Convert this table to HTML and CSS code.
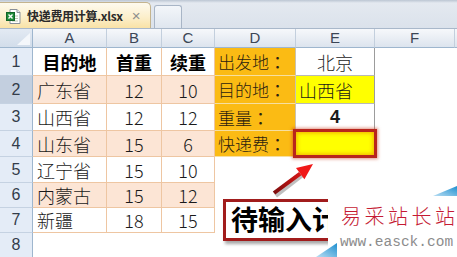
FILE: index.html
```html
<!DOCTYPE html>
<html>
<head>
<meta charset="utf-8">
<link rel="stylesheet" href="styles.css">
</head>
<body>
<div class="tabbar">
  <div class="tab">
    <svg class="xlicon" width="15" height="17" viewBox="0 0 15 17">
      <path d="M4 1.5 H11 L14 4.5 V15.5 H4 Z" fill="#fff" stroke="#8a9099" stroke-width="1"/>
      <path d="M11 1.5 V4.5 H14" fill="#e8ecef" stroke="#8a9099" stroke-width="1"/>
      <line x1="6" y1="8" x2="12" y2="8" stroke="#b9c6b0"/>
      <line x1="6" y1="10.5" x2="12" y2="10.5" stroke="#b9c6b0"/>
      <line x1="6" y1="13" x2="12" y2="13" stroke="#b9c6b0"/>
      <rect x="0.5" y="4.5" width="8" height="8" fill="#1f8a3a" stroke="#13652a"/>
      <path d="M2.5 6.5 L6.5 10.5 M6.5 6.5 L2.5 10.5" stroke="#fff" stroke-width="1.4"/>
    </svg>
    <span class="tabname">快递费用计算.xlsx</span>
    <span class="tabclose">×</span>
  </div>
  <div class="newtab"></div>
</div>

<div class="sheet">
  <div class="corner"></div>
  <div class="ch">A</div><div class="ch">B</div><div class="ch">C</div><div class="ch">D</div><div class="ch">E</div><div class="ch">F</div><div class="rest"></div>

  <div class="rh">1</div>
  <div class="c t bold center">目的地</div><div class="c t bold center">首重</div><div class="c t bold center">续重</div>
  <div class="c lab">出发地<span class="colon">：</span></div><div class="c val center">北京</div><div class="e"></div><div class="rest"></div>

  <div class="rh sel">2</div>
  <div class="c t p">广东省</div><div class="c t p center">12</div><div class="c t p center">10</div>
  <div class="c lab">目的地<span class="colon">：</span></div><div class="c val yel">山西省</div><div class="e"></div><div class="rest"></div>

  <div class="rh">3</div>
  <div class="c t">山西省</div><div class="c t center">12</div><div class="c t center">12</div>
  <div class="c lab">重量<span class="colon">：</span></div><div class="c val center num">4</div><div class="e"></div><div class="rest"></div>

  <div class="rh">4</div>
  <div class="c t p">山东省</div><div class="c t p center">15</div><div class="c t p center">6</div>
  <div class="c lab">快递费<span class="colon">：</span></div><div class="c val yel hl"></div><div class="e"></div><div class="rest"></div>

  <div class="rh">5</div>
  <div class="c t">辽宁省</div><div class="c t center">15</div><div class="c t center">10</div>
  <div class="e"></div><div class="e"></div><div class="e"></div><div class="rest"></div>

  <div class="rh">6</div>
  <div class="c t p">内蒙古</div><div class="c t p center">15</div><div class="c t p center">12</div>
  <div class="e"></div><div class="e"></div><div class="e"></div><div class="rest"></div>

  <div class="rh">7</div>
  <div class="c t">新疆</div><div class="c t center">18</div><div class="c t center">15</div>
  <div class="e"></div><div class="e"></div><div class="e"></div><div class="rest"></div>

  <div class="rh">8</div>
  <div class="e"></div><div class="e"></div><div class="e"></div><div class="e"></div><div class="e"></div><div class="e"></div><div class="rest"></div>
</div>

<svg class="arrow" width="457" height="257" viewBox="0 0 457 257">
  <defs>
    <linearGradient id="ag" x1="274" y1="193" x2="313" y2="164" gradientUnits="userSpaceOnUse">
      <stop offset="0" stop-color="#7d0d0d"/>
      <stop offset="1" stop-color="#ff1c1c"/>
    </linearGradient>
  </defs>
  <polygon points="276,196 273.5,192.5 300,172 302.4,175.6" fill="rgba(0,0,0,0.25)" transform="translate(1,1.5)"/>
  <polygon points="275.2,194.6 272.8,191.4 299,172 301.4,175.2" fill="url(#ag)"/>
  <polygon points="313,164 296,168 304.4,179.2" fill="#f01818"/>
</svg>

<div class="callout">待输入计</div>

<div class="watermark">
  <svg class="tri" width="129" height="62" viewBox="0 0 129 62">
    <defs>
      <linearGradient id="bg1" x1="0" y1="1" x2="1" y2="0">
        <stop offset="0" stop-color="#b9def3"/>
        <stop offset="1" stop-color="#1e8fd0"/>
      </linearGradient>
    </defs>
    <polygon points="105,1 129,-9 129,1" fill="url(#bg1)"/>
    <polygon points="-12,62 9,48 9,62" fill="url(#bg1)"/>
  </svg>
  <div class="wm-cn">易采站长站</div>
  <div class="wm-url">www.easck.com</div>
</div>
</body>
</html>
```

FILE: styles.css
```css
html, body {
  margin: 0;
  padding: 0;
  background: #ffffff;
  width: 457px;
  height: 257px;
  overflow: hidden;
  font-family: "Noto Sans CJK SC", "Liberation Sans", sans-serif;
}

.tabbar {
  height: 28px;
  border-bottom: 1px solid #a9b8ca;
  background: linear-gradient(#bcc6d3 0px, #e4e9f0 3px, #dbe2eb 100%);
  display: flex;
  align-items: flex-end;
  gap: 3px;
  box-sizing: content-box;
}

.tab {
  width: 152px;
  height: 26px;
  box-sizing: border-box;
  margin-left: -1px;
  border: 1px solid #c4b48e;
  border-bottom: none;
  border-radius: 0 5px 0 0;
  background: linear-gradient(#fefaee 0%, #fcefcc 55%, #f9e2a6 100%);
  display: flex;
  align-items: center;
  padding-left: 6px;
}

.xlicon {
  flex: none;
  margin-top: 2px;
}

.tabname {
  margin-left: 6px;
  font-size: 12px;
  font-weight: bold;
  color: #2a2a2a;
  white-space: nowrap;
  letter-spacing: -0.3px;
}

.tabclose {
  margin-left: 9px;
  font-size: 15px;
  color: #8e8e8e;
  font-family: "Liberation Sans", sans-serif;
}

.newtab {
  width: 28px;
  height: 23px;
  box-sizing: border-box;
  border: 1px solid #a8b5c6;
  border-bottom: none;
  border-radius: 3px 3px 0 0;
  background: linear-gradient(#f3f6fa, #dfe6ef);
}

.sheet {
  display: grid;
  grid-template-columns: 33px 74px 55px 53px 81px 79px 80px 2px;
  grid-template-rows: 19px 28px 28px 27px 26px 26px 25px 25px 25px;
}

.sheet > div {
  box-sizing: border-box;
}

.corner {
  position: relative;
  background: linear-gradient(#e3eaf3, #d2ddea);
  border-right: 1px solid #9eb6ce;
  border-bottom: 1px solid #9eb6ce;
}

.corner::after {
  content: "";
  position: absolute;
  right: 2px;
  bottom: 2px;
  width: 13px;
  height: 12px;
  background: #f4f7fb;
  clip-path: polygon(100% 0, 100% 100%, 0 100%);
}

.ch {
  background: linear-gradient(#f6f8fb 0%, #e7ecf3 60%, #dce4ee 100%);
  border-right: 1px solid #c3cfdd;
  border-bottom: 1px solid #9eb6ce;
  font-family: "Liberation Sans", sans-serif;
  font-size: 15px;
  color: #3b4656;
  text-align: center;
  line-height: 18px;
}

.rest {
  background: #ffffff;
}

.ch + .rest {
  background: linear-gradient(#f6f8fb, #dce4ee);
  border-bottom: 1px solid #9eb6ce;
}

.rh {
  background: #e4ecf7;
  border-right: 1px solid #9eb6ce;
  border-bottom: 1px solid #c5d2e2;
  font-family: "Liberation Sans", sans-serif;
  font-size: 16px;
  color: #333c4a;
  display: flex;
  align-items: center;
  justify-content: center;
}

.rh.sel {
  background: #c3cfdf;
}

.c {
  display: flex;
  align-items: center;
  font-size: 18px;
  color: #1a1a1a;
  white-space: nowrap;
  overflow: visible;
  padding-left: 4px;
  font-weight: 300;
}

.c.center {
  justify-content: center;
  padding-left: 0;
}

.c.bold {
  font-weight: bold;
  color: #000;
}

.t {
  border-right: 1px solid #eec6a2;
  border-bottom: 1px solid #eec6a2;
  background: #ffffff;
}

.t.p {
  background: #fce5d5;
}

.lab {
  background: #fbbb14;
  border-right: 1px solid #c9c2b0;
  border-bottom: 1px solid #f6dfa0;
  font-size: 17px;
  color: #2b2210;
  padding-left: 3px;
}

.colon {
  font-family: "Noto Sans CJK JP", "Noto Sans CJK TC", sans-serif;
  font-weight: 400;
}

.val {
  background: #ffffff;
  border-right: 1px solid #9c9c9c;
  border-bottom: 1px solid #b8b8b8;
  color: #1a1a1a;
}

.val.yel {
  background: #ffff00;
  padding-left: 3px;
}

.val.num {
  font-family: "Liberation Sans", sans-serif;
  font-weight: bold;
  font-size: 18px;
}

.hl {
  position: relative;
}

.hl::after {
  content: "";
  position: absolute;
  left: -3px;
  top: -2px;
  right: -3px;
  bottom: -2px;
  border: 3px solid #b8251c;
  box-shadow: 0 0 3px 1px rgba(200, 60, 30, 0.55), inset 0 0 4px 1px rgba(230, 120, 0, 0.6);
}

.e {
  background: #ffffff;
}

.arrow {
  position: absolute;
  left: 0;
  top: 0;
  pointer-events: none;
}

.callout {
  position: absolute;
  left: 223px;
  top: 199px;
  width: 120px;
  height: 42px;
  box-sizing: border-box;
  border: 3px solid #a11c1c;
  background: #ffffff;
  box-shadow: 2px 3px 3px rgba(0, 0, 0, 0.35);
  font-family: "Noto Sans CJK SC", sans-serif;
  font-weight: bold;
  font-size: 27px;
  line-height: 34px;
  color: #000;
  padding-left: 5px;
  white-space: nowrap;
  overflow: hidden;
}

.watermark {
  position: absolute;
  left: 328px;
  top: 195px;
  width: 129px;
  height: 62px;
  background: #ffffff;
  overflow: visible;
}

.tri {
  position: absolute;
  left: 0;
  top: 0;
  overflow: visible;
}

.wm-cn {
  position: absolute;
  left: 13px;
  top: 6px;
  font-family: "Noto Sans CJK SC", serif;
  font-weight: 300;
  font-size: 20px;
  letter-spacing: 3.5px;
  color: #c51a33;
  white-space: nowrap;
}

.wm-url {
  position: absolute;
  left: 12px;
  top: 39px;
  font-family: "Liberation Mono", monospace;
  font-size: 14.5px;
  color: #8c8c8c;
  white-space: nowrap;
}
```
